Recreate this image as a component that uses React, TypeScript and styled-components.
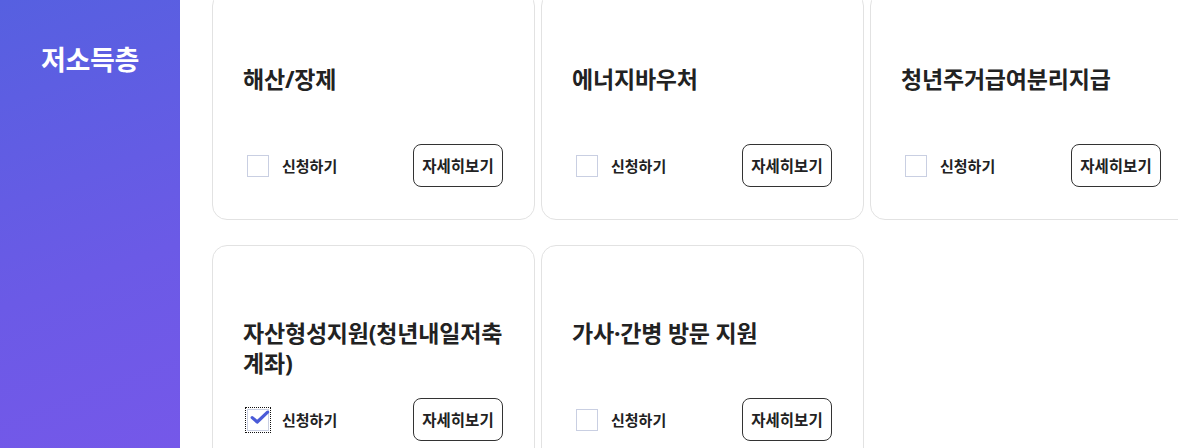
import React from 'react';
import styled, {createGlobalStyle} from 'styled-components';

type Benefit = {
  title: string;
  checked?: boolean;
};

const benefits: Benefit[] = [
  {title: '해산/장제'},
  {title: '에너지바우처'},
  {title: '청년주거급여분리지급'},
  {title: '자산형성지원(청년내일저축계좌)', checked: true},
  {title: '가사·간병 방문 지원'},
];

const GlobalStyle = createGlobalStyle`
  html, body {
    margin: 0;
    padding: 0;
    background: #ffffff;
    overflow: hidden;
  }
  body {
    font-family: "Noto Sans", "Noto Sans CJK KR", sans-serif;
    color: #222222;
  }
`;

const CheckIcon = () => (
  <svg width="20" height="15" viewBox="0 0 20 15" fill="none">
    <path
      d="M2.2 7.6 L7.2 12 L17.6 2.2"
      stroke="#4a5bd8"
      strokeWidth="3.2"
      strokeLinecap="round"
      strokeLinejoin="round"
    />
  </svg>
);

const BenefitCard = ({title, checked}: Benefit) => (
  <Card>
    <Title>{title}</Title>
    <Footer>
      <Apply>
        <CheckBox $checked={checked}>{checked && <CheckIcon />}</CheckBox>
        <ApplyLabel>신청하기</ApplyLabel>
      </Apply>
      <DetailButton>자세히보기</DetailButton>
    </Footer>
  </Card>
);

export default function App() {
  return (
    <Page>
      <GlobalStyle />
      <Sidebar>
        <SideTitle>저소득층</SideTitle>
      </Sidebar>
      <Main>
        <Grid>
          {benefits.map((b, i) => (
            <BenefitCard key={`benefit-${i}`} {...b} />
          ))}
        </Grid>
      </Main>
    </Page>
  );
}

const Page = styled.div`
  display: flex;
  width: 1178px;
  height: 448px;
  overflow: hidden;
`;

const Sidebar = styled.aside`
  flex: 0 0 180px;
  background: linear-gradient(160deg, #5660e0 0%, #6b5ae6 60%, #7558e9 100%);
  display: flex;
  justify-content: center;
  padding-top: 41px;
  box-sizing: border-box;
`;

const SideTitle = styled.h2`
  margin: 0;
  color: #ffffff;
  font-size: 27px;
  font-weight: 700;
  line-height: 38px;
  letter-spacing: -0.3px;
`;

const Main = styled.main`
  flex: 1;
  padding: 0 0 0 32px;
  margin-top: -9px;
  overflow: hidden;
`;

const Grid = styled.div`
  display: grid;
  grid-template-columns: repeat(3, 323px);
  column-gap: 6px;
  row-gap: 25px;
`;

const Card = styled.div`
  box-sizing: border-box;
  height: 229px;
  border: 1px solid #e2e2e2;
  border-radius: 15px;
  padding: 72px 31px 32px 30px;
  display: flex;
  flex-direction: column;
  background: #ffffff;
`;

const Title = styled.h3`
  margin: 0 -8px 0 0;
  height: 60px;
  font-size: 23px;
  font-weight: 700;
  line-height: 30px;
  color: #222222;
  letter-spacing: -0.2px;
`;

const Footer = styled.div`
  margin-top: auto;
  display: flex;
  align-items: center;
  justify-content: space-between;
`;

const Apply = styled.label`
  display: flex;
  align-items: center;
  gap: 13px;
  padding-left: 4px;
`;

const CheckBox = styled.span<{$checked?: boolean}>`
  box-sizing: border-box;
  width: 22px;
  height: 22px;
  border: 1px solid #c9cfe2;
  background: #ffffff;
  display: flex;
  align-items: center;
  justify-content: center;
  outline: ${({$checked}) => ($checked ? '1px dotted #111111' : 'none')};
  outline-offset: 1px;
  svg {
    margin: -4px -3px 0 0;
  }
`;

const ApplyLabel = styled.span`
  font-size: 15px;
  font-weight: 700;
  color: #222222;
`;

const DetailButton = styled.button`
  box-sizing: border-box;
  width: 90px;
  height: 43px;
  border: 1px solid #333333;
  border-radius: 8px;
  background: #ffffff;
  font-family: inherit;
  font-size: 15.5px;
  font-weight: 700;
  color: #222222;
  padding: 0;
  cursor: pointer;
`;
